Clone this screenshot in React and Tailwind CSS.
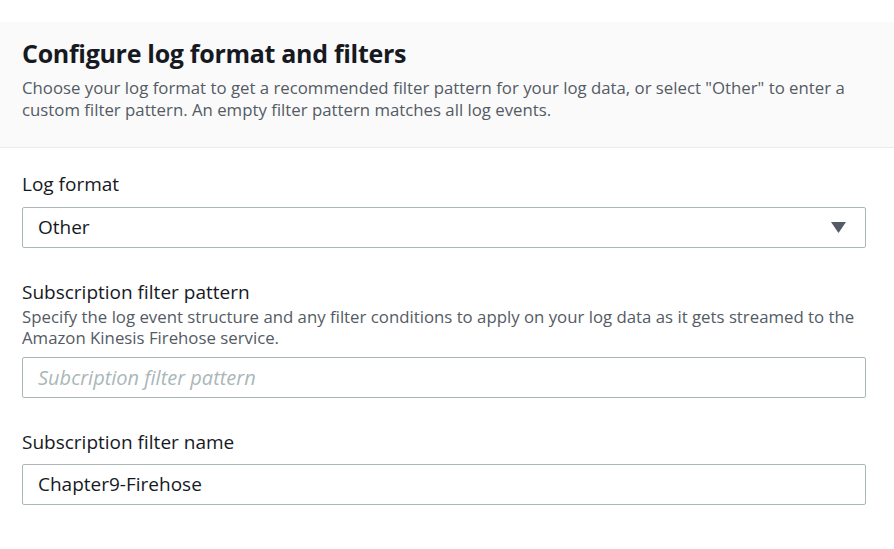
export default function App() {
  return (
    <div className="min-h-screen bg-white pt-[22px] text-[#16191f]" style={{ fontFamily: '"Open Sans", "Noto Sans", sans-serif' }}>
      {/* Header */}
      <div className="bg-[#fafafa] border-b border-[#eaeded] pl-[22px] pr-[28px] pt-[16px] pb-[26px]">
        <h2 className="text-[25px] leading-[30px] font-bold tracking-[-0.3px]">Configure log format and filters</h2>
        <p className="mt-[9px] text-[16.8px] leading-[22px] text-[#545b64] whitespace-nowrap">
          Choose your log format to get a recommended filter pattern for your log data, or select "Other" to enter a
          <br />
          custom filter pattern. An empty filter pattern matches all log events.
        </p>
      </div>

      {/* Form */}
      <div className="pl-[22px] pr-[28px] pt-[24px]">
        <div>
          <label className="block text-[19px] leading-[24px]">Log format</label>
          <div className="mt-[11px] h-[41px] border border-[#aab7b8] rounded-[2px] flex items-center justify-between pl-[15px] pr-[19px]">
            <span className="text-[19px]">Other</span>
            <svg width="15" height="11" viewBox="0 0 15 11">
              <polygon points="0,0 15,0 7.5,11" fill="#545b64" />
            </svg>
          </div>
        </div>

        <div className="mt-[32px]">
          <label className="block text-[19px] leading-[24px]">Subscription filter pattern</label>
          <p className="mt-[2px] text-[16.8px] leading-[21px] text-[#545b64] whitespace-nowrap">
            Specify the log event structure and any filter conditions to apply on your log data as it gets streamed to the
            <br />
            Amazon Kinesis Firehose service.
          </p>
          <div className="mt-[9px] h-[41px] border border-[#aab7b8] rounded-[2px] flex items-center pl-[15px]">
            <span className="text-[20px] italic text-[#aab7b8]">Subcription filter pattern</span>
          </div>
        </div>

        <div className="mt-[32px]">
          <label className="block text-[19px] leading-[24px]">Subscription filter name</label>
          <div className="mt-[10px] h-[41px] border border-[#aab7b8] rounded-[2px] flex items-center pl-[15px]">
            <span className="text-[19px]">Chapter9-Firehose</span>
          </div>
        </div>
      </div>
    </div>
  );
}
